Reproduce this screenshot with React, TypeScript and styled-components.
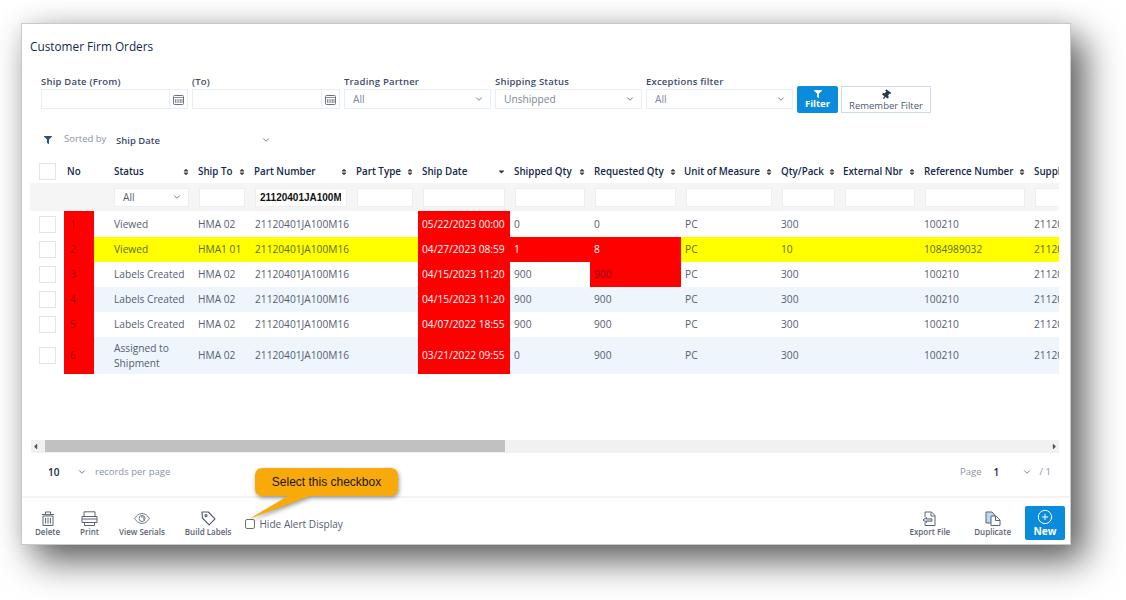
import React from 'react';
import styled, { createGlobalStyle } from 'styled-components';
import { ChevronDown, CirclePlus } from 'lucide-react';
import { FaFilter, FaThumbtack, FaCaretDown, FaCaretLeft, FaCaretRight, FaSort } from 'react-icons/fa';

const GlobalStyle = createGlobalStyle`
  html, body {
    margin: 0;
    padding: 0;
    background: #ffffff;
    overflow: hidden;
  }
  body {
    font-family: "Open Sans", "Liberation Sans", sans-serif;
    font-size: 10.2px;
    color: #555e72;
  }
`;

const Page = styled.div`
  width: 1126px;
  height: 600px;
  padding: 23px 0 0 21px;
  box-sizing: border-box;
`;

const Card = styled.div`
  position: relative;
  width: 1050px;
  height: 522px;
  box-sizing: border-box;
  border: 1px solid #c9c9c9;
  background: #fff;
  box-shadow: 14px 16px 34px rgba(0, 0, 0, 0.62), 0 0 24px rgba(0, 0, 0, 0.1);
  display: flex;
  flex-direction: column;
`;

const Title = styled.h1`
  margin: 0;
  padding: 14px 0 0 8px;
  height: 38px;
  box-sizing: border-box;
  font-size: 11.8px;
  line-height: 16px;
  font-weight: 500;
  color: #13294b;
`;

const FilterBar = styled.div`
  display: flex;
  align-items: flex-start;
  gap: 4px;
  padding: 14px 0 0 19px;
  height: 66px;
  box-sizing: border-box;
`;

const Field = styled.div<{ $width: number }>`
  width: ${(p) => p.$width}px;
  display: flex;
  flex-direction: column;
  gap: 1px;
`;

const FieldLabel = styled.label`
  height: 12px;
  font-size: 9.5px;
  line-height: 12px;
  font-weight: 600;
  letter-spacing: 0.2px;
  color: #3d4c68;
`;

const DateBox = styled.div`
  display: flex;
  height: 20px;
  box-sizing: border-box;
  border: 1px solid #e8eef6;
`;

const DateInput = styled.div`
  flex: 1;
`;

const CalendarCell = styled.div`
  width: 17px;
  border-left: 1px solid #e8eef6;
  display: flex;
  align-items: center;
  justify-content: center;
`;

const SelectBox = styled.div`
  height: 20px;
  box-sizing: border-box;
  border: 1px solid #e8eef6;
  background: #fff;
  padding: 0 6px 0 8px;
  display: flex;
  align-items: center;
  justify-content: space-between;
  font-size: 10.2px;
  color: #7c8698;
`;

const FilterButton = styled.button`
  margin-top: 10px;
  width: 41px;
  height: 27px;
  border: none;
  border-radius: 2px;
  padding: 4px 0 0;
  background: #0a8bdb;
  color: #fff;
  font-family: inherit;
  font-size: 9.5px;
  line-height: 11px;
  font-weight: 700;
  display: flex;
  flex-direction: column;
  align-items: center;
`;

const RememberButton = styled.button`
  margin: 10px 0 0 -1px;
  width: 90px;
  height: 27px;
  border: 1px solid #cfdbe8;
  background: #fff;
  padding: 3px 0 0;
  color: #4a5874;
  font-family: inherit;
  font-size: 9.5px;
  line-height: 11px;
  display: flex;
  flex-direction: column;
  align-items: center;
`;

const TiltedPin = styled(FaThumbtack)`
  transform: rotate(35deg);
`;

const SortRow = styled.div`
  height: 24px;
  padding-left: 22px;
  display: flex;
  align-items: center;
  font-size: 9.5px;
  color: #8a93a5;
`;

const SortedBy = styled.span`
  margin: -3px 0 0 12px;
  width: 52px;
`;

const SortValue = styled.span`
  width: 145px;
  font-size: 9.5px;
  font-weight: 600;
  color: #3d4c68;
`;

const TableWrap = styled.div`
  margin: 8px 0 0 8px;
  width: 1029px;
  height: 280px;
  overflow: hidden;
`;

const Table = styled.table`
  border-collapse: collapse;
  table-layout: fixed;
  width: 1100px;
`;

const HeadCell = styled.th<{ $pad?: number }>`
  height: 23px;
  padding: 0 4px 0 ${(p) => p.$pad ?? 4}px;
  text-align: left;
  font-size: 9.8px;
  font-weight: 600;
  color: #13294b;
  white-space: nowrap;
`;

const HeadInner = styled.div`
  display: flex;
  align-items: center;
  justify-content: space-between;
`;

const FilterRow = styled.tr`
  background: #f5f5f5;
`;

const FilterCell = styled.td<{ $pad?: number }>`
  height: 28px;
  padding: 0 5px 0 ${(p) => p.$pad ?? 5}px;
`;

const FilterInput = styled.input`
  display: block;
  width: 100%;
  height: 19px;
  box-sizing: border-box;
  border: 1px solid #eeeeee;
  background: #fff;
  padding: 0 5px 0 4px;
  outline: none;
  font-family: "Liberation Sans", Arial, sans-serif;
  font-size: 10px;
  font-weight: 700;
  color: #111;
`;

const FilterSelect = styled(SelectBox)`
  height: 19px;
  border-color: #eeeeee;
  color: #555e72;
`;

const Row = styled.tr<{ $tone: 'plain' | 'stripe' | 'warn'; $height: number }>`
  height: ${(p) => p.$height}px;
  background: ${(p) => (p.$tone === 'warn' ? '#ffff00' : p.$tone === 'stripe' ? '#eef5fd' : '#ffffff')};
  color: ${(p) => (p.$tone === 'warn' ? '#5d6a22' : '#555e72')};
`;

const CheckCell = styled.td`
  background: #fff;
  padding: 0 0 0 9px;
`;

const RowCheck = styled.div`
  width: 17px;
  height: 17px;
  box-sizing: border-box;
  border: 1px solid #e4e4e4;
  background: #fff;
`;

const Cell = styled.td<{ $alert?: 'light' | 'dark'; $pad?: number }>`
  padding: 0 2px 0 ${(p) => p.$pad ?? 4}px;
  font-size: 10.2px;
  line-height: 15px;
  overflow: hidden;
  white-space: nowrap;
  ${(p) => p.$alert && 'background: #ff0000;'}
  ${(p) => p.$alert === 'light' && 'color: #ffffff;'}
  ${(p) => p.$alert === 'dark' && 'color: #8c1020;'}
`;

const StatusCell = styled(Cell)`
  white-space: normal;
`;

const ScrollBar = styled.div`
  margin-left: 9px;
  width: 1028px;
  height: 13px;
  background: #f1f1f1;
  display: flex;
  align-items: center;
  justify-content: space-between;
  position: relative;
  color: #555;
`;

const ScrollThumb = styled.div`
  position: absolute;
  left: 14px;
  top: 0;
  width: 460px;
  height: 12px;
  background: #c1c1c1;
`;

const Pager = styled.div`
  height: 43px;
  box-sizing: border-box;
  padding: 0 19px 6px 26px;
  display: flex;
  align-items: center;
  justify-content: space-between;
  font-size: 9.5px;
  color: #8a93a5;
`;

const PagerSide = styled.div`
  display: flex;
  align-items: center;
`;

const PagerValue = styled.span<{ $width: number; $left?: number }>`
  width: ${(p) => p.$width}px;
  margin: 1px 0 0 ${(p) => p.$left ?? 0}px;
  font-size: 10px;
  font-weight: 600;
  color: #13294b;
`;

const PagerText = styled.span<{ $left: number }>`
  margin-left: ${(p) => p.$left}px;
`;

const Footer = styled.div`
  flex: 1;
  border-top: 2px solid #f3f3f3;
  display: flex;
  justify-content: space-between;
  padding: 8px 5px 0 13px;
`;

const ToolGroup = styled.div<{ $gap: number }>`
  display: flex;
  align-items: flex-start;
  gap: ${(p) => p.$gap}px;
`;

const Tool = styled.button`
  border: none;
  background: none;
  padding: 5px 0 0;
  height: 26px;
  box-sizing: content-box;
  font-family: inherit;
  font-size: 8px;
  line-height: 11px;
  font-weight: 600;
  color: #5b6474;
  display: flex;
  flex-direction: column;
  align-items: center;
  white-space: nowrap;

  svg {
    margin: auto 0;
  }
`;

const HideAlert = styled.label`
  margin: 11px 0 0 -6px;
  display: flex;
  align-items: center;
  gap: 4px;
  font-size: 10.1px;
  color: #555e72;
`;

const AlertBox = styled.span`
  width: 10px;
  height: 10px;
  box-sizing: border-box;
  border: 1px solid #6f6f6f;
  border-radius: 2px;
  background: #fff;
`;

const NewButton = styled.button`
  width: 40px;
  height: 34px;
  margin-top: 0;
  border: none;
  border-radius: 2px;
  padding: 3px 0 0;
  background: #0a8bdb;
  color: #fff;
  font-family: inherit;
  font-size: 10.2px;
  line-height: 12px;
  font-weight: 700;
  display: flex;
  flex-direction: column;
  align-items: center;
`;

const Callout = styled.div`
  position: absolute;
  left: 223px;
  top: 442px;
  width: 160px;
  height: 58px;
`;

const CalloutText = styled.span`
  position: absolute;
  left: 10px;
  top: 2px;
  width: 143px;
  height: 28px;
  display: flex;
  align-items: center;
  justify-content: center;
  font-family: "Liberation Sans", Arial, sans-serif;
  font-size: 12px;
  color: #1c1406;
`;

type Column = { label: string; width: number; pad?: number; sort: 'both' | 'desc' };

const columns: Column[] = [
  { label: 'Status', width: 100, pad: 20, sort: 'both' },
  { label: 'Ship To', width: 56, sort: 'both' },
  { label: 'Part Number', width: 102, sort: 'both' },
  { label: 'Part Type', width: 66, sort: 'both' },
  { label: 'Ship Date', width: 92, sort: 'desc' },
  { label: 'Shipped Qty', width: 80, sort: 'both' },
  { label: 'Requested Qty', width: 91, sort: 'both' },
  { label: 'Unit of Measure', width: 96, pad: 3, sort: 'both' },
  { label: 'Qty/Pack', width: 63, sort: 'both' },
  { label: 'External Nbr', width: 80, pad: 3, sort: 'both' },
  { label: 'Reference Number', width: 110, sort: 'both' },
  { label: 'Supplier Part', width: 100, sort: 'both' },
];

type Order = {
  no: number;
  status: string;
  shipTo: string;
  date: string;
  shipped: string;
  requested: string;
  qtyPack: string;
  reference: string;
  tone: 'plain' | 'stripe' | 'warn';
  height: number;
  shippedAlert?: 'light';
  requestedAlert?: 'light' | 'dark';
};

const orders: Order[] = [
  { no: 1, status: 'Viewed', shipTo: 'HMA 02', date: '05/22/2023 00:00', shipped: '0', requested: '0', qtyPack: '300', reference: '100210', tone: 'plain', height: 26 },
  { no: 2, status: 'Viewed', shipTo: 'HMA1 01', date: '04/27/2023 08:59', shipped: '1', requested: '8', qtyPack: '10', reference: '1084989032', tone: 'warn', height: 25, shippedAlert: 'light', requestedAlert: 'light' },
  { no: 3, status: 'Labels Created', shipTo: 'HMA 02', date: '04/15/2023 11:20', shipped: '900', requested: '900', qtyPack: '300', reference: '100210', tone: 'plain', height: 25, requestedAlert: 'dark' },
  { no: 4, status: 'Labels Created', shipTo: 'HMA 02', date: '04/15/2023 11:20', shipped: '900', requested: '900', qtyPack: '300', reference: '100210', tone: 'stripe', height: 25 },
  { no: 5, status: 'Labels Created', shipTo: 'HMA 02', date: '04/07/2022 18:55', shipped: '900', requested: '900', qtyPack: '300', reference: '100210', tone: 'plain', height: 25 },
  { no: 6, status: 'Assigned to Shipment', shipTo: 'HMA 02', date: '03/21/2022 09:55', shipped: '0', requested: '900', qtyPack: '300', reference: '100210', tone: 'stripe', height: 37 },
];

const PART = '21120401JA100M16';

const Chevron = ({ color = '#5b6474' }: { color?: string }) => <ChevronDown size={10} color={color} strokeWidth={2} />;

const SortMark = ({ sort }: { sort: Column['sort'] }) => {
  if (sort === 'desc') return <FaCaretDown size={9} color="#333" />;
  return <FaSort size={8} color="#444" />;
};

const CalendarIcon = () => (
  <svg width="11" height="11" viewBox="0 0 11 11" fill="none" stroke="#6d7480" strokeWidth="1">
    <rect x="0.5" y="1.5" width="10" height="9" rx="1" />
    <path d="M0.5 3.5h10M2.5 5v4M4.2 5v4M5.9 5v4M7.6 5v4M9 5v4" strokeWidth="0.8" />
  </svg>
);

const DeleteIcon = () => (
  <svg width="14" height="15" viewBox="0 0 14 15" fill="none" stroke="#5b6474" strokeWidth="1">
    <path d="M1 3.5h12M4.5 3V1h5v2M2 5h10v9.5H2zM4.6 7v5.5M7 7v5.5M9.4 7v5.5" />
  </svg>
);

const PrintIcon = () => (
  <svg width="17" height="15" viewBox="0 0 17 15" fill="none" stroke="#5b6474" strokeWidth="1">
    <path d="M3 5.5V.8h11v4.7M1 5.5h15v6H1zM1 8h15M3.5 11.5v3h10v-3" />
  </svg>
);

const EyeIcon = () => (
  <svg width="16" height="11" viewBox="0 0 16 11" fill="none" stroke="#5b6474" strokeWidth="0.9">
    <path d="M0.6 5.5C3 1.8 5.5 0.6 8 0.6s5 1.2 7.4 4.9C13 9.2 10.5 10.4 8 10.4S3 9.2 0.6 5.5Z" />
    <circle cx="8" cy="5.5" r="3" />
    <path d="M7 4a2 2 0 0 1 2.6 2.7" />
  </svg>
);

const TagIcon = () => (
  <svg width="15" height="15" viewBox="0 0 15 15" fill="none" stroke="#4f5868" strokeWidth="1.1">
    <path d="M1 1h6.3l6.7 6.8-5.9 6L1.4 7z" strokeLinejoin="round" />
    <circle cx="5" cy="4.6" r="1.1" />
  </svg>
);

const ExportIcon = () => (
  <svg width="15" height="15" viewBox="0 0 15 15" fill="none" stroke="#5b6474" strokeWidth="1">
    <path d="M3 6V1h6.5L13 4.5V14.5H3v-3" />
    <path d="M9 1.5V5h4" />
    <path d="M1 9l3.5-2.6v1.5h5.5v2.2H4.5v1.5z" fill="#cfe2f5" />
  </svg>
);

const DuplicateIcon = () => (
  <svg width="16" height="15" viewBox="0 0 16 15" fill="none" stroke="#5b6474" strokeWidth="1">
    <path d="M1 1h6l2.5 3v8H1z" fill="#bcd9f4" />
    <path d="M6 5h5l4 4v5.5H6z" fill="#fff" />
    <path d="M10.5 5v4.5H15" />
  </svg>
);

const CalloutShape = () => (
  <svg width="160" height="58" viewBox="0 0 160 58" style={{ overflow: 'visible', filter: 'drop-shadow(1px 2px 2px rgba(0,0,0,.4))' }}>
    <path
      d="M17 2H146a7 7 0 0 1 7 7V23a7 7 0 0 1-7 7H65L4 53 43 30H17a7 7 0 0 1-7-7V9a7 7 0 0 1 7-7Z"
      fill="#f9aa0b"
    />
  </svg>
);

const cellValues = (o: Order) => [o.shipTo, PART, ''];

export default function App() {
  return (
    <Page>
      <GlobalStyle />
      <Card>
        <Title>Customer Firm Orders</Title>

        <FilterBar>
          <Field $width={147}>
            <FieldLabel>Ship Date (From)</FieldLabel>
            <DateBox>
              <DateInput />
              <CalendarCell><CalendarIcon /></CalendarCell>
            </DateBox>
          </Field>
          <Field $width={148}>
            <FieldLabel>(To)</FieldLabel>
            <DateBox>
              <DateInput />
              <CalendarCell><CalendarIcon /></CalendarCell>
            </DateBox>
          </Field>
          <Field $width={147}>
            <FieldLabel>Trading Partner</FieldLabel>
            <SelectBox>All <Chevron /></SelectBox>
          </Field>
          <Field $width={147}>
            <FieldLabel>Shipping Status</FieldLabel>
            <SelectBox>Unshipped <Chevron /></SelectBox>
          </Field>
          <Field $width={147}>
            <FieldLabel>Exceptions filter</FieldLabel>
            <SelectBox>All <Chevron /></SelectBox>
          </Field>
          <FilterButton><FaFilter size={8} />Filter</FilterButton>
          <RememberButton><TiltedPin size={10} color="#2c3a50" />Remember Filter</RememberButton>
        </FilterBar>

        <SortRow>
          <FaFilter size={8} color="#2f5276" />
          <SortedBy>Sorted by</SortedBy>
          <SortValue>Ship Date</SortValue>
          <Chevron />
        </SortRow>

        <TableWrap>
          <Table>
            <colgroup>
              <col style={{ width: 34 }} />
              <col style={{ width: 30 }} />
              {columns.map((c) => <col key={c.label} style={{ width: c.width }} />)}
            </colgroup>
            <thead>
              <tr>
                <CheckCell><RowCheck /></CheckCell>
                <HeadCell $pad={3}>No</HeadCell>
                {columns.map((c) => (
                  <HeadCell key={c.label} $pad={c.pad}>
                    <HeadInner>{c.label}<SortMark sort={c.sort} /></HeadInner>
                  </HeadCell>
                ))}
              </tr>
              <FilterRow>
                <FilterCell />
                <FilterCell />
                {columns.map((c) => (
                  <FilterCell key={c.label} $pad={c.label === 'Status' ? c.pad : undefined}>
                    {c.label === 'Status' ? (
                      <FilterSelect>All <Chevron /></FilterSelect>
                    ) : (
                      <FilterInput readOnly value={c.label === 'Part Number' ? PART : ''} />
                    )}
                  </FilterCell>
                ))}
              </FilterRow>
            </thead>
            <tbody>
              {orders.map((o) => (
                <Row key={o.no} $tone={o.tone} $height={o.height}>
                  <CheckCell><RowCheck /></CheckCell>
                  <Cell $alert="dark" $pad={6}>{o.no}</Cell>
                  <StatusCell $pad={20}>{o.status}</StatusCell>
                  {cellValues(o).map((v, i) => <Cell key={i} $pad={i === 1 ? 5 : 4}>{v}</Cell>)}
                  <Cell $alert="light">{o.date}</Cell>
                  <Cell $alert={o.shippedAlert}>{o.shipped}</Cell>
                  <Cell $alert={o.requestedAlert}>{o.requested}</Cell>
                  <Cell>PC</Cell>
                  <Cell>{o.qtyPack}</Cell>
                  <Cell />
                  <Cell>{o.reference}</Cell>
                  <Cell>{PART}</Cell>
                </Row>
              ))}
            </tbody>
          </Table>
        </TableWrap>

        <ScrollBar>
          <FaCaretLeft size={9} />
          <ScrollThumb />
          <FaCaretRight size={9} />
        </ScrollBar>

        <Pager>
          <PagerSide>
            <PagerValue $width={29}>10</PagerValue>
            <Chevron />
            <PagerText $left={8}>records per page</PagerText>
          </PagerSide>
          <PagerSide>
            <PagerText $left={0}>Page</PagerText>
            <PagerValue $width={28} $left={12}>1</PagerValue>
            <Chevron />
            <PagerText $left={8}>/ 1</PagerText>
          </PagerSide>
        </Pager>

        <Footer>
          <ToolGroup $gap={20}>
            <Tool><DeleteIcon />Delete</Tool>
            <Tool><PrintIcon />Print</Tool>
            <Tool><EyeIcon />View Serials</Tool>
            <Tool><TagIcon />Build Labels</Tool>
            <HideAlert><AlertBox />Hide Alert Display</HideAlert>
          </ToolGroup>
          <ToolGroup $gap={14}>
            <ToolGroup $gap={24}>
              <Tool><ExportIcon />Export File</Tool>
              <Tool><DuplicateIcon />Duplicate</Tool>
            </ToolGroup>
            <NewButton><CirclePlus size={16} strokeWidth={1.5} />New</NewButton>
          </ToolGroup>
        </Footer>

        <Callout>
          <CalloutShape />
          <CalloutText>Select this checkbox</CalloutText>
        </Callout>
      </Card>
    </Page>
  );
}
